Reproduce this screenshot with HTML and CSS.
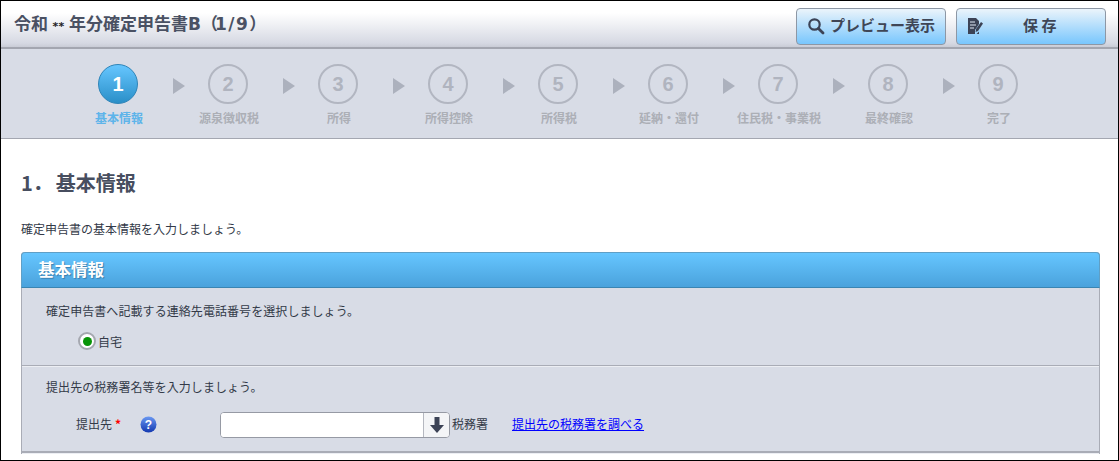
FILE: index.html
```html
<!DOCTYPE html>
<html lang="ja">
<head>
<meta charset="utf-8">
<title>確定申告書</title>
<link rel="stylesheet" href="styles.css">
</head>
<body>
<div class="frame">
  <header class="topbar">
    <h1 class="doc-title">令和 <span class="mask">**</span> 年分確定申告書B（<span class="page-count">1/9</span>）</h1>
    <div class="actions">
      <button class="btn btn-preview" type="button">
        <svg class="btn-icon" width="18" height="18" viewBox="0 0 18 18"><circle cx="7.5" cy="7.5" r="5.2" fill="none" stroke="#3c4356" stroke-width="2.2"/><path d="M11.4 11.4 L16 16" stroke="#3c4356" stroke-width="2.8" stroke-linecap="round"/></svg>
        <span>プレビュー表示</span>
      </button>
      <button class="btn btn-save" type="button">
        <svg class="btn-icon" width="16" height="18" viewBox="0 0 16 18"><path d="M1 1 H9 L12 4 V7 L8 13 V17 H1 Z" fill="#3c4356"/><path d="M3 5 H8 M3 8 H9 M3 11 H7" stroke="#dfeaf5" stroke-width="1"/><path d="M9 12 L14 5 L16 6.5 L11 14 L8.6 15 Z" fill="#3c4356"/><path d="M12 17 H9.5 L12 14.5 Z" fill="#3c4356"/></svg>
        <span class="save-label">保 存</span>
      </button>
    </div>
  </header>

  <nav class="steps">
    <div class="step step-current"><div class="step-top"><i class="arrow arrow-none"></i><b class="num">1</b></div><span class="step-label">基本情報</span></div>
    <div class="step"><div class="step-top"><i class="arrow"></i><b class="num">2</b></div><span class="step-label">源泉徴収税</span></div>
    <div class="step"><div class="step-top"><i class="arrow"></i><b class="num">3</b></div><span class="step-label">所得</span></div>
    <div class="step"><div class="step-top"><i class="arrow"></i><b class="num">4</b></div><span class="step-label">所得控除</span></div>
    <div class="step"><div class="step-top"><i class="arrow"></i><b class="num">5</b></div><span class="step-label">所得税</span></div>
    <div class="step"><div class="step-top"><i class="arrow"></i><b class="num">6</b></div><span class="step-label">延納・還付</span></div>
    <div class="step"><div class="step-top"><i class="arrow"></i><b class="num">7</b></div><span class="step-label">住民税・事業税</span></div>
    <div class="step"><div class="step-top"><i class="arrow"></i><b class="num">8</b></div><span class="step-label">最終確認</span></div>
    <div class="step"><div class="step-top"><i class="arrow"></i><b class="num">9</b></div><span class="step-label">完了</span></div>
  </nav>

  <main class="content">
    <h2 class="section-title"><span class="section-num">1．</span>基本情報</h2>
    <p class="lead">確定申告書の基本情報を入力しましょう。</p>
    <section class="panel">
      <h3 class="panel-head">基本情報</h3>
      <div class="panel-row row-phone">
        <p class="row-text">確定申告書へ記載する連絡先電話番号を選択しましょう。</p>
        <label class="radio-line"><span class="radio"><span class="radio-dot"></span></span>自宅</label>
      </div>
      <div class="panel-row row-office">
        <p class="row-text">提出先の税務署名等を入力しましょう。</p>
        <div class="field">
          <span class="field-name">提出先<em class="req">*</em></span>
          <svg class="help" width="17" height="17" viewBox="0 0 17 17"><defs><linearGradient id="hg" x1="0" y1="0" x2="0" y2="1"><stop offset="0" stop-color="#6a98f2"/><stop offset="1" stop-color="#1238b0"/></linearGradient></defs><circle cx="8.5" cy="8.5" r="8" fill="url(#hg)"/><text x="8.5" y="13" text-anchor="middle" class="help-q">?</text></svg>
          <span class="combo"><input class="combo-input" type="text"><span class="combo-btn"><svg width="14" height="16" viewBox="0 0 14 16"><path d="M4.5 0 H9.5 V8 H14 L7 16 L0 8 H4.5 Z" fill="#3c4356"/></svg></span></span>
          <span class="suffix">税務署</span>
          <a class="link" href="#">提出先の税務署を調べる</a>
        </div>
      </div>
      <div class="panel-row"></div>
    </section>
  </main>
</div>
</body>
</html>
```
FILE: styles.css
```css
* { box-sizing: border-box; }
html, body { margin: 0; padding: 0; background: #fff; }
body {
  font-family: "Noto Sans CJK JP", "Liberation Sans", sans-serif;
  font-size: 12px;
  color: #3f4656;
}
.frame {
  width: 1119px;
  height: 461px;
  border: 1px solid #000;
  overflow: hidden;
  background: #fff;
}
.topbar {
  height: 48px;
  display: flex;
  align-items: flex-start;
  justify-content: space-between;
  padding: 7px 12px 0 13px;
  background: linear-gradient(#fff 0, #fff 12px, #d6d9e3 42px, #c9ccd6 46px);
  border-bottom: 2px solid #a3a6b0;
}
.doc-title {
  margin: 2px 0 0;
  font-family: "DejaVu Sans", "Noto Sans CJK JP", sans-serif;
  font-size: 17px;
  line-height: 28px;
  font-weight: 700;
  word-spacing: -1.5px;
  color: #4a5163;
  height: 28px;
}
.mask { font-size: 11px; font-weight: 700; color: #222; letter-spacing: 0.3px; }
.page-count { letter-spacing: 1.5px; margin-left: -3px; }
.actions { display: flex; gap: 10px; }
.btn {
  height: 37px;
  width: 150px;
  display: flex;
  align-items: center;
  padding: 0 0 4px 10px;
  border: 1px solid #8d97a5;
  border-radius: 4px;
  background: linear-gradient(#ebf4fb, #78c6fd);
  font: 700 15px/1 "Noto Sans CJK JP", sans-serif;
  color: #3f4656;
}
.btn-icon { flex: none; margin-right: 5px; margin-top: 3px; }
.save-label { margin-left: 35px; }
.steps {
  height: 90px;
  display: flex;
  padding: 15px 0 0 62px;
  background: #d8dce6;
  border-bottom: 1px solid #a4a7b1;
}
.step { width: 110px; flex: none; display: flex; flex-direction: column; align-items: stretch; }
.step-top { display: flex; align-items: center; height: 40px; }
.arrow {
  width: 0;
  height: 0;
  margin-right: 23px;
  margin-top: 4px;
  border-left: 12px solid #acb1bd;
  border-top: 8px solid transparent;
  border-bottom: 8px solid transparent;
}
.arrow-none { visibility: hidden; }
.num {
  width: 40px;
  height: 40px;
  border: 2px solid #b2b6c1;
  border-radius: 50%;
  display: flex;
  align-items: center;
  justify-content: center;
  font: 700 20px/1 "Liberation Sans", sans-serif;
  color: #b0b4bf;
}
.step-label {
  margin-top: 5px;
  padding-left: 2px;
  text-align: center;
  font-size: 12px;
  line-height: 18px;
  font-weight: 700;
  color: #acafb6;
}
.step-current .num {
  border: 1px solid #2e84b8;
  background: linear-gradient(#66c6ff, #2a8fc8);
  color: #fff;
}
.step-current .step-label { color: #5db4ea; }
.content { padding: 0 18px 0 20px; }
.section-title {
  margin: 30px 0 0;
  font-size: 20px;
  line-height: 28px;
  font-weight: 700;
  color: #474e5f;
}
.section-num { margin-right: 3px; }
.lead { margin: 23px 0 0; font-size: 12px; line-height: 18px; color: #333a48; }
.panel {
  margin-top: 14px;
  border: 1px solid #a9acb6;
  border-top: 0;
  border-radius: 4px 4px 0 0;
  background: #d8dce6;
}
.panel-head {
  margin: 0 -1px;
  height: 36px;
  padding-left: 16px;
  border: 1px solid #5f9fc6;
  border-bottom-color: #3a85b2;
  border-radius: 4px 4px 0 0;
  background: linear-gradient(#66c6ff, #4aa2dc);
  color: #fff;
  font-size: 16.5px;
  line-height: 32px;
  font-weight: 700;
  text-shadow: 1px 1px 1px #3b7fae;
}
.panel-row { border-bottom: 1px solid #a9acb6; box-shadow: 0 1px 0 #eceef3; padding-left: 24px; }
.row-phone { height: 78px; padding-top: 14px; }
.row-office { height: 86px; padding-top: 12px; }
.row-text { margin: 0; font-size: 12px; line-height: 18px; letter-spacing: 0.07px; color: #333a48; }
.radio-line { display: flex; align-items: center; margin: 11px 0 0 32px; height: 20px; color: #333a48; }
.radio {
  width: 18px;
  height: 18px;
  border-radius: 50%;
  border: 2px solid #a5a8b0;
  background: #fff;
  display: flex;
  align-items: center;
  justify-content: center;
  margin-right: 2px;
}
.radio-dot { width: 9px; height: 9px; border-radius: 50%; background: #089408; }
.field { display: flex; align-items: center; margin-top: 16px; height: 26px; padding-left: 30px; }
.field-name { width: 64px; margin-top: -4px; color: #333a48; }
.req { font-style: normal; color: #f00; font-weight: 700; margin-left: 3px; }
.help { flex: none; margin-top: -2px; }
.help-q { font: 700 12px "Liberation Sans", sans-serif; fill: #fff; }
.combo {
  display: flex;
  width: 230px;
  height: 26px;
  margin-left: 63px;
  border: 1px solid #969aa4;
  border-radius: 4px;
  background: #fff;
  overflow: hidden;
}
.combo-input { flex: 1; min-width: 0; border: 0; padding: 0 4px; background: #fff; outline: 0; }
.combo-btn {
  width: 26px;
  background: #f4f5f7;
  border-left: 1px solid #b5b8c0;
  display: flex;
  align-items: center;
  justify-content: center;
}
.suffix { margin: -4px 0 0 2px; color: #333a48; }
.link { margin: -4px 0 0 24px; color: #00f; text-decoration: underline; }
```
